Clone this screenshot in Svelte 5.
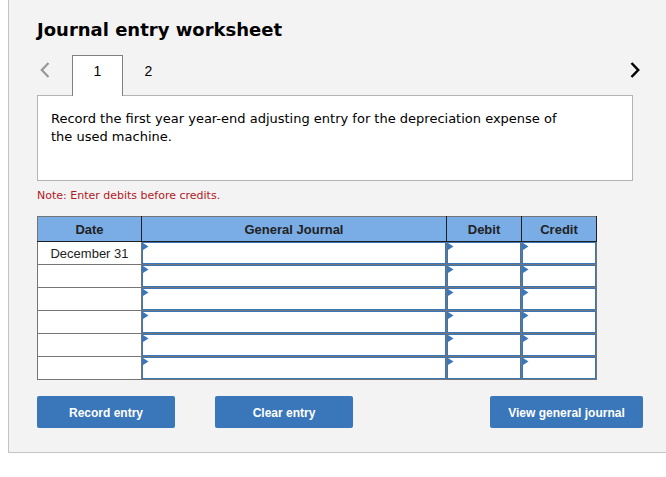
<script>
  const tabs = [
    { id: 1, text: "Record the first year year-end adjusting entry for the depreciation expense of the used machine." },
    { id: 2, text: "" },
  ];
  const fields = ["account", "debit", "credit"];

  let current = $state(1);
  let rows = $state(
    Array.from({ length: 6 }, (_, i) => ({
      date: i === 0 ? "December 31" : "",
      account: "",
      debit: "",
      credit: "",
    }))
  );

  let active = $derived(tabs.find((tab) => tab.id === current));

  function clearEntry() {
    for (const row of rows) {
      for (const field of fields) row[field] = "";
    }
  }
</script>

<main class="worksheet">
  <h1>Journal entry worksheet</h1>

  <nav class="tab-bar">
    <button class="arrow prev" aria-label="Previous entry" onclick={() => (current = 1)}>
      <svg width="10" height="16" viewBox="0 0 10 16">
        <path d="M8.5 1 1.8 8l6.7 7" fill="none" stroke="currentColor" stroke-width="2.2" />
      </svg>
    </button>
    {#each tabs as tab}
      <button class="tab" class:selected={tab.id === current} onclick={() => (current = tab.id)}>
        {tab.id}
      </button>
    {/each}
    <button class="arrow next" aria-label="Next entry" onclick={() => (current = 2)}>
      <svg width="10" height="16" viewBox="0 0 10 16">
        <path d="M1.5 1 8.2 8l-6.7 7" fill="none" stroke="currentColor" stroke-width="2.5" />
      </svg>
    </button>
  </nav>

  <section class="instructions">
    <p>{active.text}</p>
  </section>

  <p class="note">Note: Enter debits before credits.</p>

  <table>
    <colgroup>
      <col class="col-date" />
      <col />
      <col class="col-amount" />
      <col class="col-amount" />
    </colgroup>
    <thead>
      <tr>
        <th>Date</th>
        <th>General Journal</th>
        <th>Debit</th>
        <th>Credit</th>
      </tr>
    </thead>
    <tbody>
      {#each rows as row, i}
        <tr>
          <td class="date">{row.date}</td>
          {#each fields as field}
            <td class="entry">
              <input type="text" aria-label="{field} {i + 1}" bind:value={row[field]} />
              <svg class="marker" width="6" height="7" viewBox="0 0 6 7">
                <path d="M0 0 5.5 3.5 0 7z" fill="#3a76ba" />
              </svg>
            </td>
          {/each}
        </tr>
      {/each}
    </tbody>
  </table>

  <div class="actions">
    <button class="action">Record entry</button>
    <button class="action" onclick={clearEntry}>Clear entry</button>
    <button class="action view">View general journal</button>
  </div>
</main>

<style>
  :global(body) {
    margin: 0;
    background: #fff;
  }

  .worksheet {
    margin-left: 8px;
    padding: 18px 23px 24px 28px;
    background: #f3f3f3;
    border-left: 1px solid #c4c4c4;
    border-bottom: 1px solid #c4c4c4;
    font-family: Verdana, "DejaVu Sans", sans-serif;
    color: #000;
  }

  h1 {
    margin: 0;
    font-size: 18px;
    line-height: 24px;
    font-weight: bold;
  }

  button {
    margin: 0;
    padding: 0;
    border: 0;
    background: none;
    font-family: Arial, "Liberation Sans", sans-serif;
    cursor: pointer;
  }

  .tab-bar {
    display: flex;
    align-items: flex-start;
    margin-top: 13px;
  }

  .arrow {
    height: 30px;
  }

  .arrow svg {
    display: block;
  }

  .prev {
    width: 35px;
    padding-left: 3px;
    color: #999;
  }

  .next {
    margin-left: auto;
    padding-right: 3px;
    color: #000;
  }

  .tab {
    box-sizing: border-box;
    width: 51px;
    height: 41px;
    padding-bottom: 10px;
    border: 1px solid transparent;
    border-bottom: 0;
    font-size: 14px;
    color: #000;
  }

  .tab.selected {
    position: relative;
    border-color: #808080;
    background: #fff;
  }

  .instructions {
    box-sizing: border-box;
    min-height: 86px;
    margin: -1px 10px 0 0;
    padding: 14px 60px 14px 13px;
    border: 1px solid #b4b4b4;
    background: #fff;
  }

  .instructions p {
    margin: 0;
    font-size: 13px;
    line-height: 18px;
  }

  .note {
    margin: 7px 0 12px;
    font-size: 11px;
    line-height: 16px;
    color: #b2181e;
  }

  table {
    width: calc(100% - 46px);
    border-collapse: collapse;
    table-layout: fixed;
    background: #fff;
    font-family: Arial, "Liberation Sans", sans-serif;
    font-size: 13px;
    color: #222;
  }

  .col-date {
    width: 104px;
  }

  .col-amount {
    width: 75px;
  }

  th {
    height: 24px;
    padding: 0;
    border: 1px solid #1f1f1f;
    border-top-color: #757575;
    background: #7aace5;
    font-weight: bold;
  }

  th:first-child {
    border-left-color: #757575;
  }

  td {
    height: 22px;
    padding: 0;
    border: 1px solid #757575;
    text-align: center;
  }

  .entry {
    position: relative;
  }

  .entry input {
    display: block;
    box-sizing: border-box;
    width: 100%;
    height: 22px;
    padding: 0 8px;
    border: 1px solid #3a76ba;
    border-radius: 0;
    outline: 0;
    background: #fff;
    font: inherit;
  }

  .marker {
    position: absolute;
    top: 1px;
    left: 1px;
    pointer-events: none;
  }

  .actions {
    display: flex;
    gap: 40px;
    margin-top: 16px;
  }

  .action {
    width: 138px;
    height: 32px;
    padding-top: 2px;
    border-radius: 2px;
    background: #3a76ba;
    font-size: 12px;
    font-weight: bold;
    color: #fff;
  }

  .view {
    width: 153px;
    margin-left: auto;
  }
</style>
